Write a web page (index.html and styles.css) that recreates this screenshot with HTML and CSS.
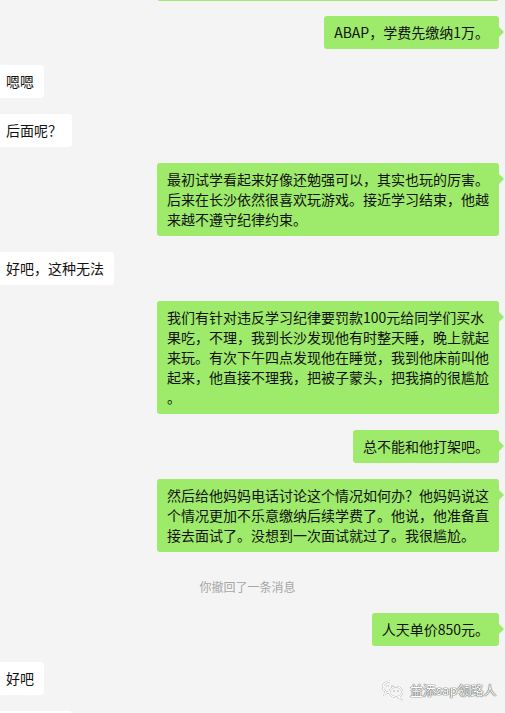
FILE: index.html
```html
<!DOCTYPE html>
<html lang="zh-CN">
<head>
<meta charset="utf-8">
<title>聊天记录</title>
<link rel="stylesheet" href="styles.css">
</head>
<body>
<div class="chat">
  <div class="row me partial"><div class="bubble wide"></div></div>
  <div class="row me"><div class="bubble">ABAP，学费先缴纳1万。</div></div>
  <div class="row other"><div class="bubble">嗯嗯</div></div>
  <div class="row other"><div class="bubble">后面呢？</div></div>
  <div class="row me"><div class="bubble wide">最初试学看起来好像还勉强可以，其实也玩的厉害。<br>后来在长沙依然很喜欢玩游戏。接近学习结束，他越<br>来越不遵守纪律约束。</div></div>
  <div class="row other"><div class="bubble">好吧，这种无法</div></div>
  <div class="row me"><div class="bubble wide">我们有针对违反学习纪律要罚款100元给同学们买水<br>果吃，不理，我到长沙发现他有时整天睡，晚上就起<br>来玩。有次下午四点发现他在睡觉，我到他床前叫他<br>起来，他直接不理我，把被子蒙头，把我搞的很尴尬<br>。</div></div>
  <div class="row me"><div class="bubble">总不能和他打架吧。</div></div>
  <div class="row me"><div class="bubble wide">然后给他妈妈电话讨论这个情况如何办？他妈妈说这<br>个情况更加不乐意缴纳后续学费了。他说，他准备直<br>接去面试了。没想到一次面试就过了。我很尴尬。</div></div>
  <div class="recall">你撤回了一条消息</div>
  <div class="row me"><div class="bubble">人天单价850元。</div></div>
  <div class="row other"><div class="bubble">好吧</div></div>
  <div class="row other"><div class="bubble stub"></div></div>
</div>
<div class="watermark">
  <svg class="wm-icon" width="24" height="22" viewBox="0 0 24 22">
    <g fill="none" stroke="#ffffff" stroke-width="1.6">
      <path d="M9 2.5c-4 0-7 2.6-7 5.8 0 1.8 1 3.3 2.5 4.4l-0.7 2.2 2.6-1.3c0.8 0.3 1.7 0.4 2.6 0.4"/>
      <ellipse cx="15" cy="13" rx="6.3" ry="5.2"/>
      <path d="M18.5 17.6l1.2 2.2-2.6-1.2"/>
    </g>
    <g fill="#ffffff"><circle cx="6.5" cy="7" r="0.9"/><circle cx="11" cy="7" r="0.9"/><circle cx="13" cy="12.2" r="0.8"/><circle cx="17" cy="12.2" r="0.8"/></g>
  </svg>
  <span class="wm-text">益添sap领路人</span>
</div>
</body>
</html>
```
FILE: styles.css
```css
html, body {
  margin: 0;
  padding: 0;
  background: #f4f4f4;
  overflow: hidden;
}

body {
  width: 505px;
  height: 713px;
  position: relative;
  font-family: "Noto Sans CJK SC", "Microsoft YaHei", sans-serif;
  font-size: 14px;
  color: #111;
}

.chat {
  display: flex;
  flex-direction: column;
  gap: 16px;
}

.row {
  display: flex;
}

.row.me {
  justify-content: flex-end;
  padding-right: 6px;
}

.row.other {
  justify-content: flex-start;
}

.row.partial {
  margin-top: -40px;
  margin-bottom: -1px;
}

.row.partial .bubble {
  height: 41px;
  padding-top: 0;
  padding-bottom: 0;
}

.bubble {
  position: relative;
  line-height: 20px;
  padding: 6px 10px 7px;
  border-radius: 3px;
  white-space: nowrap;
}

.row.me .bubble {
  background: #9eea6a;
}

.row.me .bubble::after {
  content: "";
  position: absolute;
  right: -5px;
  top: 11px;
  border-left: 5px solid #9eea6a;
  border-top: 5px solid transparent;
  border-bottom: 5px solid transparent;
}

.row.partial .bubble::after {
  display: none;
}

.row.other .bubble {
  background: #ffffff;
  margin-left: -4px;
}

.bubble.wide {
  width: 322px;
}

.bubble.stub {
  width: 56px;
  height: 20px;
}

.recall {
  margin-top: 9px;
  line-height: 20px;
  font-size: 12px;
  color: #a6a6a6;
  text-align: center;
  padding-right: 10px;
}

.watermark {
  position: absolute;
  left: 381px;
  top: 679px;
  display: flex;
  align-items: center;
  gap: 5px;
}

.wm-icon {
  filter: drop-shadow(0 0 0.7px rgba(0, 0, 0, 0.7));
}

.wm-text {
  font-size: 13px;
  line-height: 20px;
  color: #ffffff;
  text-shadow: 0 0 1px #555, 0 0 1px #555, 0 0 1px #777;
}
```
